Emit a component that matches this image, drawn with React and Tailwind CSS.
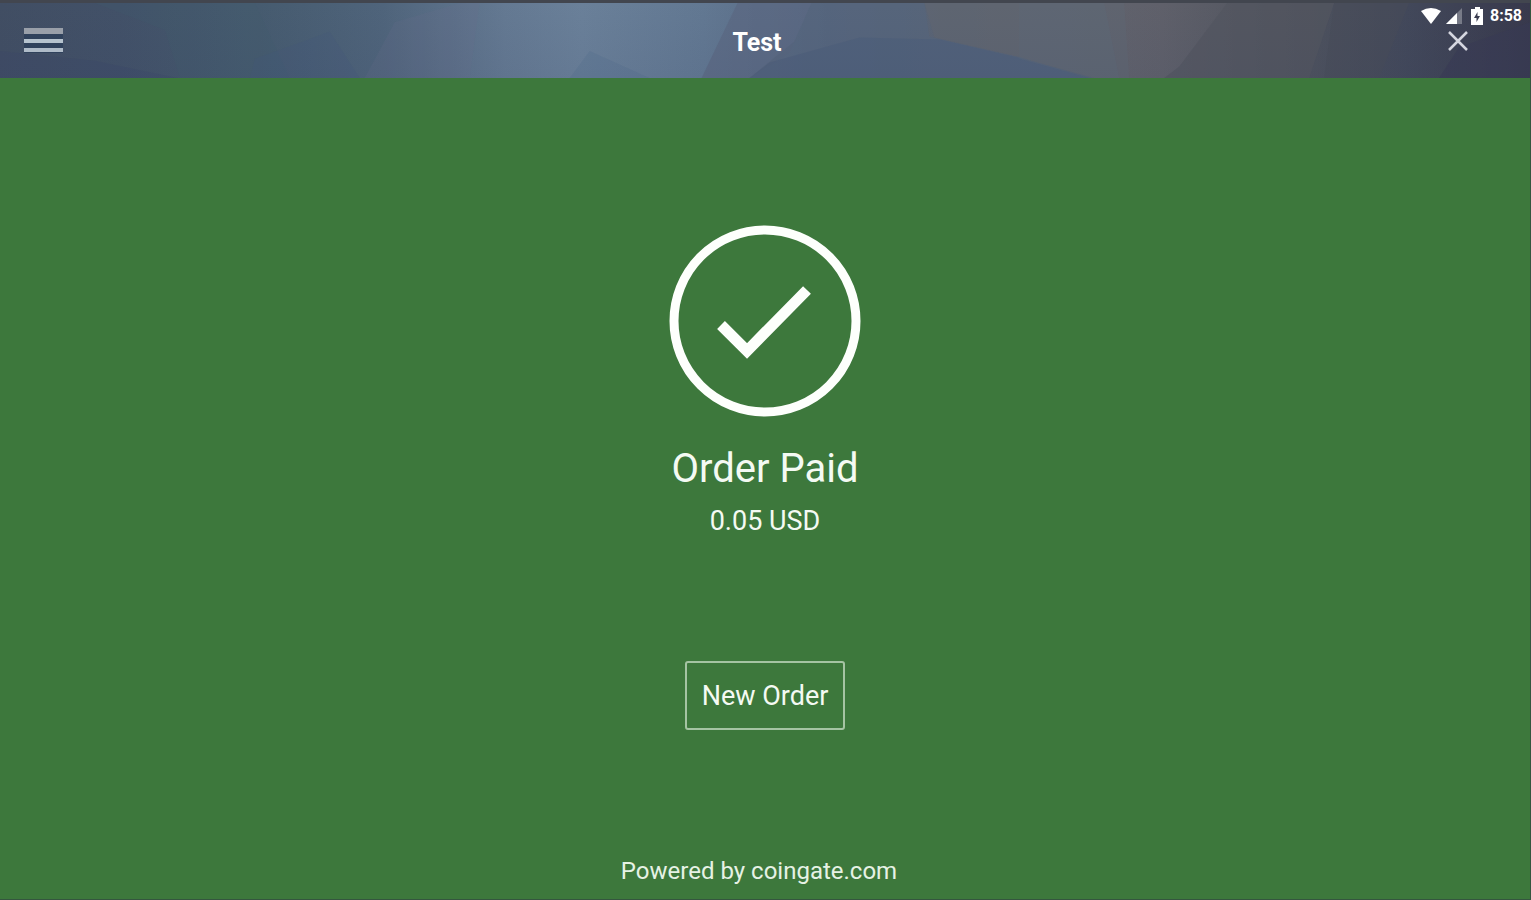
import React, { useState } from "react";

const HeaderBackdrop = () => (
  <svg
    className="absolute inset-0 h-full w-full"
    viewBox="0 0 1531 78"
    preserveAspectRatio="none"
    aria-hidden="true"
  >
    <defs>
      <linearGradient id="sky" x1="0" x2="1" y1="0" y2="0">
        <stop offset="0" stopColor="#414e63" />
        <stop offset="0.08" stopColor="#425168" />
        <stop offset="0.17" stopColor="#465b6f" />
        <stop offset="0.25" stopColor="#4f647b" />
        <stop offset="0.33" stopColor="#647992" />
        <stop offset="0.38" stopColor="#6a8099" />
        <stop offset="0.46" stopColor="#627892" />
        <stop offset="0.54" stopColor="#566781" />
        <stop offset="0.62" stopColor="#5b6473" />
        <stop offset="0.68" stopColor="#62656f" />
        <stop offset="0.76" stopColor="#5f606a" />
        <stop offset="0.84" stopColor="#50545e" />
        <stop offset="0.92" stopColor="#42485a" />
        <stop offset="1" stopColor="#38394c" />
      </linearGradient>
      <linearGradient id="shade" x1="0" x2="0" y1="0" y2="1">
        <stop offset="0" stopColor="#2f3a60" stopOpacity="0" />
        <stop offset="1" stopColor="#2f3a60" stopOpacity="0.08" />
      </linearGradient>
    </defs>
    <rect width="1531" height="78" fill="url(#sky)" />
    <path d="M0 50L95 60L178 78H0z" fill="#35406a" opacity="0.2" />
    <path d="M95 0L165 28L180 78H290L255 0z" fill="#3f6070" opacity="0.2" />
    <path d="M330 30L360 78H250L255 58z" fill="#45597a" opacity="0.25" />
    <path d="M365 78L395 20L460 0H480L470 78z" fill="#67708e" opacity="0.2" />
    <path d="M590 50L650 78H570z" fill="#516a8c" opacity="0.25" />
    <path d="M738 0L702 78H750L790 52L812 0z" fill="#5b6882" opacity="0.7" />
    <path d="M812 0L795 40L750 78H1090L1020 56L930 35L925 0z" fill="#55657c" opacity="0.7" />
    <path d="M770 62L860 36L940 38L1020 57L1095 78H750z" fill="#4f5f7a" opacity="0.7" />
    <path d="M925 0L935 36L1020 56L1095 78H1130L1125 0z" fill="#606571" opacity="0.7" />
    <path d="M1020 0H1105L1120 78H1090L1020 58z" fill="#5c6878" opacity="0.4" />
    <path d="M1228 0L1180 66L1165 78H1310L1335 0z" fill="#53555f" opacity="0.7" />
    <path d="M1335 0L1325 78H1380L1410 0z" fill="#484c58" opacity="0.5" />
    <path d="M1460 46L1531 20V78H1440z" fill="#393a53" opacity="0.6" />
    <rect width="1531" height="78" fill="url(#shade)" />
  </svg>
);

const StatusBar = ({ time }) => (
  <div className="absolute top-1 right-2 flex items-center gap-1 text-white">
    <svg className="h-4 w-[22px]" viewBox="0 0 22 16" fill="currentColor" aria-hidden="true">
      <path d="M1 3Q11 -3 21 3L11 16z" />
    </svg>
    <svg className="h-4 w-4" viewBox="0 0 16 16" fill="currentColor" aria-hidden="true">
      <path d="M16 0V16H0z" opacity="0.3" />
      <path d="M11 5V16H0z" />
    </svg>
    <svg className="ml-1 h-[18px] w-4" viewBox="0 0 16 18" aria-hidden="true">
      <path d="M5 0H10V2H13V18H1V2H5z" fill="currentColor" />
      <path d="M7.500 5L4 11H6.500V15L10 9H7.500z" fill="#3a3c4f" />
    </svg>
    <span className="text-base leading-4 font-bold">{time}</span>
  </div>
);

const Header = ({ title, time, onMenu, onClose }) => (
  <header className="relative border-t-[3px] border-[#42464f]">
    <HeaderBackdrop />
    <div className="relative grid h-[75px] grid-cols-[1fr_auto_1fr] items-center pr-10 pl-6">
      <button type="button" aria-label="Menu" onClick={onMenu} className="w-10 cursor-pointer">
        <svg className="h-7 w-10" viewBox="0 0 40 28" aria-hidden="true">
          <path d="M0 1H39V26H0z" fill="#203653" opacity="0.5" />
          <path d="M0 1H39V7H0z" fill="#999fa9" />
          <path d="M0 12H39V16H0z" fill="#b6c3ce" />
          <path d="M0 21H39V25H0z" fill="#afbbc8" />
        </svg>
      </button>
      <h1 className="pt-1 text-[25px] leading-8 font-bold text-white">{title}</h1>
      <button
        type="button"
        aria-label="Close"
        onClick={onClose}
        className="flex h-10 w-16 cursor-pointer items-center justify-center justify-self-end"
      >
        <svg className="h-5 w-5" viewBox="0 0 20 20" aria-hidden="true">
          <path d="M1 1L19 19M19 1L1 19" stroke="#d5d6df" strokeWidth="2.500" fill="none" />
        </svg>
      </button>
    </div>
    <StatusBar time={time} />
  </header>
);

const App = () => {
  const [order, setOrder] = useState({ status: "Order Paid", amount: "0.05 USD" });

  return (
    <div className="flex min-h-screen flex-col border-r border-b border-[#35563f] bg-[#3d783c] font-[Roboto,sans-serif]">
      <Header title="Test" time="8:58" />
      <main className="flex flex-1 flex-col items-center pt-[147px] text-[#f4faf3]">
        <svg className="h-48 w-48" viewBox="0 0 192 192" fill="none" stroke="#fdfffc" aria-hidden="true">
          <circle cx="96" cy="96" r="91" strokeWidth="9" />
          <path d="M52 100L78 126L138 65" strokeWidth="11" />
        </svg>
        <h2 className="mt-7 text-[40px] leading-12">{order.status}</h2>
        <p className="mt-2 text-[27px] leading-10">{order.amount}</p>
        <button
          type="button"
          onClick={() => setOrder({ ...order })}
          className="mt-30 cursor-pointer rounded-[3px] border-2 border-[#a5c4a3] px-[15px] pt-[17px] pb-4 text-[27px] leading-8"
        >
          New Order
        </button>
      </main>
      <footer className="pr-3 pb-3 text-center text-2xl text-[#e6f2e5]">
        Powered by coingate.com
      </footer>
    </div>
  );
};

export default App;
